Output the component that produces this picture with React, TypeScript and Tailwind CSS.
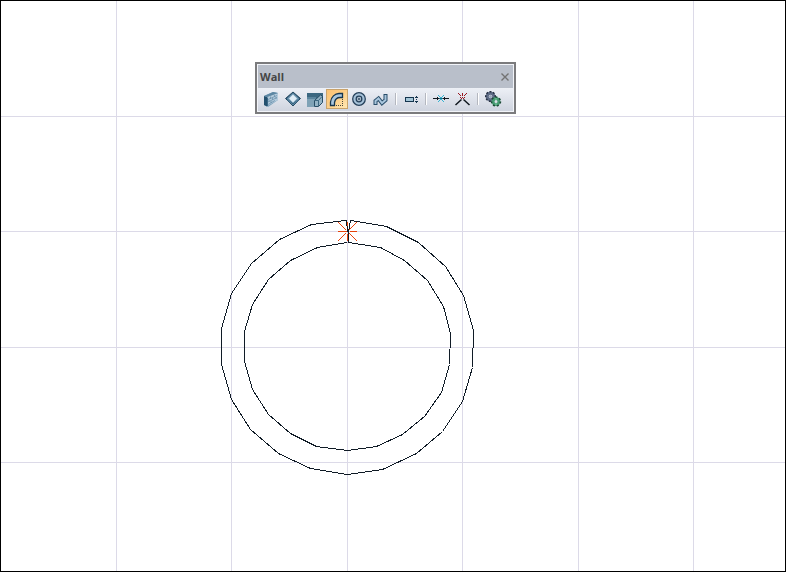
import { useState } from "react"
import type { ReactNode } from "react"

const GRID_START = 116
const GRID_STEP = 115.4
const GRID_LINES = Array.from({ length: 30 }, (_, i) =>
  Math.round(GRID_START + GRID_STEP * i),
)

const OUTER_WALL =
  "348,232 347,231 347,226 346,225 346,220 345,220 311,224 279,239 251,263 231,293 221,328 221,364 231,399 250,429 278,453 310,468 347,474 382,469 416,453 442,431 462,401 472,367 473,330 463,295 445,266 418,242 386,226 350,220 349,226 348,232 348,242"
const INNER_WALL =
  "347,242 317,247 290,260 268,279 252,304 244,331 244,361 252,389 268,414 290,433 316,446 347,450 376,446 402,434 424,416 441,392 449,364 450,333 443,306 427,280 404,260 380,247 348,242"

// start x, start y, x direction, y direction
const MARKER_RAYS = [
  [338, 222, 1, 1],
  [356, 222, -1, 1],
  [338, 240, 1, -1],
  [356, 240, -1, -1],
]
const RAY_LENGTH = 8

type Tool = {
  id: string
  label: string
  icon: ReactNode
}

function Icon({ children }: { children: ReactNode }) {
  return (
    <svg
      width="18"
      height="18"
      viewBox="0 0 18 18"
      fill="none"
      aria-hidden="true"
      className="shrink-0"
    >
      {children}
    </svg>
  )
}

const DRAW_TOOLS: Tool[] = [
  {
    id: "wall",
    label: "Straight wall",
    icon: (
      <Icon>
        <path d="M2 6L11 2L16 3V10L6 17L2 15Z" fill="#7fa3bc" />
        <path d="M2 6L5 7V16.500L2 15Z" fill="#24506e" />
        <path d="M5 7L16 3V10L5 16Z" fill="#b4cbdc" />
        <path d="M2 6L11 2L16 3L5 7Z" fill="#5d87a3" />
        <path
          d="M6 9.500L15 5.500M6 12L15 7.500M6 14.500L13 10.500M8.500 6.500V9M12.500 5V7M10.500 8V10M7 10V12M14 7V9M9 11V13"
          stroke="#6c92ad"
          strokeWidth="0.800"
        />
        <path d="M5.500 7.500V16" stroke="#3a6785" />
      </Icon>
    ),
  },
  {
    id: "slab",
    label: "Polygon wall",
    icon: (
      <Icon>
        <path d="M9 2L16.500 8.500L9 16L1.500 8.500Z" fill="#2c5876" stroke="#23475f" />
        <path d="M9 3L15 8.500L9 13.500L3 8.500Z" fill="#7199b3" />
        <path d="M9 4.500L13 8.500L9 12.500L5 8.500Z" fill="#dfecf5" />
        <path d="M3 9.500L9 15L15 9.500" stroke="#5f8ca8" />
      </Icon>
    ),
  },
  {
    id: "corner",
    label: "Trapezoid wall",
    icon: (
      <Icon>
        <path d="M1 3H17V9H1Z" fill="#3c6881" />
        <path d="M1 8H11L8 11V17H1Z" fill="#7fa2b6" />
        <path d="M1 7H10V9H1Z" fill="#5b859d" />
        <path
          d="M8.500 10.500L14.500 5L16.500 6V12.500L12.500 16.500H8.500Z"
          fill="#93b3c5"
          stroke="#274d65"
        />
        <path d="M12.500 16V10.500L16 6.500M9 10.500H12.500" stroke="#3c6881" />
      </Icon>
    ),
  },
  {
    id: "arc",
    label: "Curved wall",
    icon: (
      <Icon>
        <path
          d="M2.500 15.500V12C3 7 7 3.500 11 3.500H14.500V7.500H12C9 7.500 7 10 6.500 12.500V15.500Z"
          fill="#a9c6dd"
          stroke="#15354e"
          strokeWidth="1.300"
        />
        <path
          d="M14.500 9V16M8 15.500H14"
          stroke="#4a4a40"
          strokeDasharray="1 1"
        />
      </Icon>
    ),
  },
  {
    id: "circle",
    label: "Circular wall",
    icon: (
      <Icon>
        <circle cx="9" cy="9" r="6" fill="#a5c1d8" />
        <circle cx="9" cy="9" r="6.300" stroke="#233f59" strokeWidth="1.300" />
        <circle
          cx="9"
          cy="9"
          r="2.800"
          fill="#d9e6f1"
          stroke="#233f59"
          strokeWidth="1.300"
        />
        <path d="M9 7.500V10.500M7.500 9H10.500" stroke="#233f59" />
      </Icon>
    ),
  },
  {
    id: "spline",
    label: "Spline wall",
    icon: (
      <Icon>
        <path
          d="M3.500 15V11L6.500 8.500L10 13L13.500 10V4"
          stroke="#294d69"
          strokeWidth="4"
        />
        <path
          d="M3.500 14V11L6.500 8.500L10 13L13.500 10V5"
          stroke="#a9c6dd"
          strokeWidth="2"
        />
      </Icon>
    ),
  },
]

const REFERENCE_TOOLS: Tool[] = [
  {
    id: "reference",
    label: "Reference line",
    icon: (
      <Icon>
        <g shapeRendering="crispEdges">
          <path d="M3 7H12V12H3Z" fill="#15354e" />
          <path d="M4 8H11V11H4Z" fill="#a4c6d8" />
          <path
            d="M14 6H15V7H16V8H13V7H14ZM14 9H15V10H14ZM13 11H16V12H15V13H14V12H13Z"
            fill="#15354e"
          />
        </g>
      </Icon>
    ),
  },
]

const EDIT_TOOLS: Tool[] = [
  {
    id: "connect",
    label: "Connect walls",
    icon: (
      <Icon>
        <g shapeRendering="crispEdges">
          <path
            d="M6 5H7V6H6ZM11 5H12V6H11ZM7 6H8V7H7ZM10 6H11V7H10ZM8 7H10V8H8ZM8 9H10V10H8ZM7 10H8V11H7ZM10 10H11V11H10ZM6 11H7V12H6ZM11 11H12V12H11Z"
            fill="#35b4d2"
          />
          <path d="M1 8H7V9H1ZM11 8H17V9H11ZM5 7H6V10H5ZM12 7H13V10H12Z" fill="#10171e" />
          <path d="M7 8H11V9H7Z" fill="#1f6f86" />
        </g>
      </Icon>
    ),
  },
  {
    id: "merge",
    label: "Merge walls",
    icon: (
      <Icon>
        <path
          d="M1.500 15L7.500 9.500M15.500 15L9.500 9.500"
          stroke="#10171e"
          strokeWidth="1.500"
        />
        <g fill="#98161f" shapeRendering="crispEdges">
          <path d="M8 3H9V6H8ZM8 7H9V8H8Z" />
          <path d="M4 3H5V4H4ZM5 4H6V5H5ZM6 5H7V6H6Z" />
          <path d="M12 3H13V4H12ZM11 4H12V5H11ZM10 5H11V6H10Z" />
          <path d="M7 8H8V9H7ZM9 8H10V9H9ZM6 7H7V8H6ZM10 7H11V8H10Z" />
        </g>
      </Icon>
    ),
  },
]

const SETTINGS_TOOLS: Tool[] = [
  {
    id: "settings",
    label: "Wall settings",
    icon: (
      <Icon>
        <circle cx="6.500" cy="6.500" r="3.300" stroke="#5c6a84" strokeWidth="3" />
        <circle
          cx="6.500"
          cy="6.500"
          r="4.800"
          stroke="#252f40"
          strokeWidth="1.400"
          strokeDasharray="2 1.500"
        />
        <circle cx="6.500" cy="6.500" r="1.500" fill="#98a5ba" />
        <circle cx="12" cy="11.500" r="3" stroke="#459a70" strokeWidth="3" />
        <circle
          cx="12"
          cy="11.500"
          r="4.500"
          stroke="#1d4937"
          strokeWidth="1.500"
          strokeDasharray="2 2"
        />
        <path d="M12 8V10M12 13V15" stroke="#7cc39d" />
      </Icon>
    ),
  },
]

const TOOL_GROUPS = [DRAW_TOOLS, REFERENCE_TOOLS, EDIT_TOOLS, SETTINGS_TOOLS]

function Drawing() {
  return (
    <svg
      className="absolute inset-0 h-full w-full"
      fill="none"
      shapeRendering="crispEdges"
      role="img"
      aria-label="Circular wall on the drawing grid"
    >
      <g fill="#dcdae8">
        {GRID_LINES.map((pos) => (
          <rect key={`x${pos}`} x={pos} y="0" width="1" height="100%" />
        ))}
        {GRID_LINES.map((pos) => (
          <rect key={`y${pos}`} x="0" y={pos} width="100%" height="1" />
        ))}
      </g>
      <g transform="translate(0.5 0.5)">
        <polyline points={OUTER_WALL} stroke="#101b26" />
        <polyline points={INNER_WALL} stroke="#101b26" />
      </g>
      <g fill="#e8430a">
        {MARKER_RAYS.map(([x, y, dx, dy]) =>
          Array.from({ length: RAY_LENGTH }, (_, i) => (
            <rect
              key={`${x}-${y}-${i}`}
              x={x + dx * i}
              y={y + dy * i}
              width="1"
              height="1"
            />
          )),
        )}
        <rect x="338" y="231" width="9" height="1" />
        <rect x="350" y="231" width="7" height="1" />
        <rect x="347" y="222" width="1" height="4" />
        <rect x="347" y="234" width="1" height="7" />
      </g>
    </svg>
  )
}

function ToolButton({
  tool,
  active,
  onClick,
}: {
  tool: Tool
  active: boolean
  onClick: () => void
}) {
  return (
    <button
      type="button"
      aria-label={tool.label}
      aria-pressed={active}
      onClick={onClick}
      className={`flex h-5 w-[22px] items-center justify-center border ${
        active
          ? "border-[#c9a36b] bg-linear-to-br from-[#fbc172] via-[#fdcf87] to-[#ffe8b4]"
          : "border-transparent"
      }`}
    >
      {tool.icon}
    </button>
  )
}

export default function App() {
  const [activeTool, setActiveTool] = useState("arc")
  const [open, setOpen] = useState(true)

  return (
    <main className="relative min-h-screen overflow-hidden bg-white font-['Open_Sans',sans-serif]">
      <Drawing />
      <div className="pointer-events-none absolute inset-0 border border-black" />

      {open && (
        <section className="absolute top-[62px] left-[255px] border-2 border-[#7b7b7d] bg-[#f2f4f9] p-px">
          <header className="flex h-[23px] items-center justify-between bg-[#b9bfca] pl-[2px]">
            <h1 className="text-[11px] leading-4 font-bold text-[#454545]">
              Wall
            </h1>
            <button
              type="button"
              aria-label="Close"
              onClick={() => setOpen(false)}
              className="flex size-4 items-center justify-center text-[#737373]"
            >
              <svg width="8" height="8" viewBox="0 0 8 8" fill="none">
                <path
                  d="M0.500 0.500L7.500 7.500M7.500 0.500L0.500 7.500"
                  stroke="currentColor"
                  strokeWidth="1.400"
                />
              </svg>
            </button>
          </header>

          <div
            role="toolbar"
            aria-label="Wall tools"
            className="flex h-[23px] items-start bg-linear-to-b from-[#edf0f6] to-[#cfd4df] pt-px pr-[9px] pl-[2px]"
          >
            {TOOL_GROUPS.map((tools, i) => (
              <div key={tools[0].id} className="flex items-center">
                {i > 0 && (
                  <div className="flex w-2 justify-center">
                    <div className="h-3 w-[2px] border-r border-l border-r-white border-l-[#b4b7bf]" />
                  </div>
                )}
                {tools.map((tool) => (
                  <ToolButton
                    key={tool.id}
                    tool={tool}
                    active={tool.id === activeTool}
                    onClick={() => setActiveTool(tool.id)}
                  />
                ))}
              </div>
            ))}
          </div>
        </section>
      )}
    </main>
  )
}
